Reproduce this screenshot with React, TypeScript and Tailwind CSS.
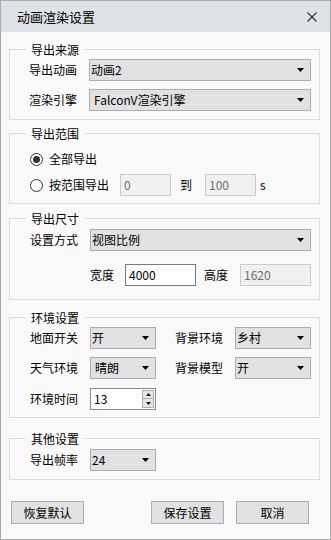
import React from "react";

const font = "font-['Noto_Sans_CJK_SC',sans-serif]";

const Arrow = () => (
  <svg width="7" height="4" viewBox="0 0 7 4" className="shrink-0">
    <path d="M0 0h7L3.5 4z" fill="#000" />
  </svg>
);

const Select = ({ value, className = "", pad = "pl-[1px]" }: { value: string; className?: string; pad?: string }) => (
  <div
    className={`flex items-center justify-between h-[22px] bg-[#e1e1e1] border border-[#adadad] ${pad} pr-[6px] text-[12px] leading-[20px] ${className}`}
  >
    <span>{value}</span>
    <Arrow />
  </div>
);

const Input = ({ value, disabled, className = "" }: { value: string; disabled?: boolean; className?: string }) => (
  <div
    className={`flex items-center h-[22px] pl-[3px] text-[12px] leading-[20px] border ${
      disabled ? "bg-[#f0f0f0] border-[#cccccc] text-[#6d6d6d]" : "bg-white border-[#7a7a7a] text-black"
    } ${className}`}
  >
    {value}
  </div>
);

const Label = ({ children, className = "" }: { children: React.ReactNode; className?: string }) => (
  <span className={`shrink-0 w-[60px] text-[12px] leading-[20px] ${className}`}>{children}</span>
);

const Group = ({ title, className = "", inner = "", children }: { title: string; className?: string; inner?: string; children: React.ReactNode }) => (
  <fieldset className={`ml-[8px] w-[311px] border border-[#dcdcdc] ${className}`}>
    <legend className="ml-[16px] px-[5px] text-[12px] leading-[17px]">{title}</legend>
    <div className={`flex flex-col pl-[20px] pr-[8px] ${inner}`}>{children}</div>
  </fieldset>
);

const Radio = ({ checked }: { checked?: boolean }) => (
  <span className="shrink-0 flex items-center justify-center w-[13px] h-[13px] rounded-full border border-[#333333] bg-white">
    {checked && <span className="w-[7px] h-[7px] rounded-full bg-[#333333]" />}
  </span>
);

const Button = ({ children, className = "" }: { children: React.ReactNode; className?: string }) => (
  <button
    className={`w-[73px] h-[23px] bg-[#e1e1e1] border border-[#adadad] text-[12px] leading-[20px] text-black ${className}`}
  >
    {children}
  </button>
);

export default function App() {
  return (
    <div className={`w-[331px] h-[540px] flex flex-col border border-[#ababab] bg-[#f9f9f9] text-black ${font}`}>
      <div className="flex items-center justify-between h-[31px] bg-[#dee1e6] pl-[16px] pr-[13px]">
        <span className="text-[13px] leading-[18px]">动画渲染设置</span>
        <svg width="10" height="10" viewBox="0 0 10 10">
          <path d="M0.5 0.5L9.5 9.5M9.5 0.5L0.5 9.5" stroke="#333" strokeWidth="1.1" />
        </svg>
      </div>

      <div className="flex flex-col pt-[9px]">
        <Group title="导出来源" inner="pt-[1px] pb-[8px] gap-[8px] !pl-[19px]">
          <div className="flex items-center">
            <Label>导出动画</Label>
            <Select value="动画2" className="flex-1" />
          </div>
          <div className="flex items-center">
            <Label>渲染引擎</Label>
            <Select value="FalconV渲染引擎" className="flex-1" pad="pl-[4px]" />
          </div>
        </Group>

        <Group title="导出范围" className="mt-[5px]" inner="pt-[6px] pb-[7px] gap-[4px]">
          <div className="flex items-center h-[22px] text-[12px] leading-[20px]">
            <Radio checked />
            <span className="ml-[6px]">全部导出</span>
          </div>
          <div className="flex items-center h-[22px] text-[12px] leading-[20px]">
            <Radio />
            <span className="ml-[6px] w-[60px]">按范围导出</span>
            <Input value="0" disabled className="ml-[11px] w-[51px]" />
            <span className="ml-[9px]">到</span>
            <Input value="100" disabled className="ml-[13px] w-[51px]" />
            <span className="ml-[4px]">s</span>
          </div>
        </Group>

        <Group title="导出尺寸" className="mt-[6px]" inner="pt-[2px] pb-[13px] gap-[13px]">
          <div className="flex items-center">
            <Label>设置方式</Label>
            <Select value="视图比例" className="flex-1" />
          </div>
          <div className="flex items-center ml-[60px] text-[12px] leading-[20px]">
            <span className="w-[24px]">宽度</span>
            <Input value="4000" className="ml-[11px] w-[71px]" />
            <span className="ml-[8px] w-[24px]">高度</span>
            <Input value="1620" disabled className="ml-[12px] w-[71px]" />
          </div>
        </Group>

        <Group title="环境设置" className="mt-[9px]" inner="pt-[1px] pb-[7px]">
          <div className="flex items-center">
            <Label>地面开关</Label>
            <Select value="开" className="w-[66px]" />
            <Label className="ml-[19px]">背景环境</Label>
            <Select value="乡村" className="w-[76px]" />
          </div>
          <div className="flex items-center mt-[8px]">
            <Label>天气环境</Label>
            <Select value="晴朗" className="w-[66px]" pad="pl-[4px]" />
            <Label className="ml-[19px]">背景模型</Label>
            <Select value="开" className="w-[76px]" />
          </div>
          <div className="flex items-center mt-[9px]">
            <Label>环境时间</Label>
            <div className="flex items-center justify-between w-[66px] h-[22px] bg-white border border-[#8a8a8a] pl-[3px] pr-[1px] text-[12px] leading-[20px]">
              <span>13</span>
              <div className="flex flex-col">
                <div className="flex items-center justify-center w-[12px] h-[9px] bg-[#e6e6e6] border border-[#adadad]">
                  <svg width="5" height="3" viewBox="0 0 5 3">
                    <path d="M0 3h5L2.5 0z" fill="#000" />
                  </svg>
                </div>
                <div className="flex items-center justify-center w-[12px] h-[9px] bg-[#e6e6e6] border border-t-0 border-[#adadad]">
                  <svg width="5" height="3" viewBox="0 0 5 3">
                    <path d="M0 0h5L2.5 3z" fill="#000" />
                  </svg>
                </div>
              </div>
            </div>
          </div>
        </Group>

        <Group title="其他设置" className="mt-[12px]" inner="pt-[2px] pb-[8px]">
          <div className="flex items-center">
            <Label>导出帧率</Label>
            <Select value="24" className="w-[66px]" />
          </div>
        </Group>

        <div className="flex items-center mt-[21px]">
          <Button className="ml-[10px]">恢复默认</Button>
          <Button className="ml-[67px]">保存设置</Button>
          <Button className="ml-[12px]">取消</Button>
        </div>
      </div>
    </div>
  );
}
